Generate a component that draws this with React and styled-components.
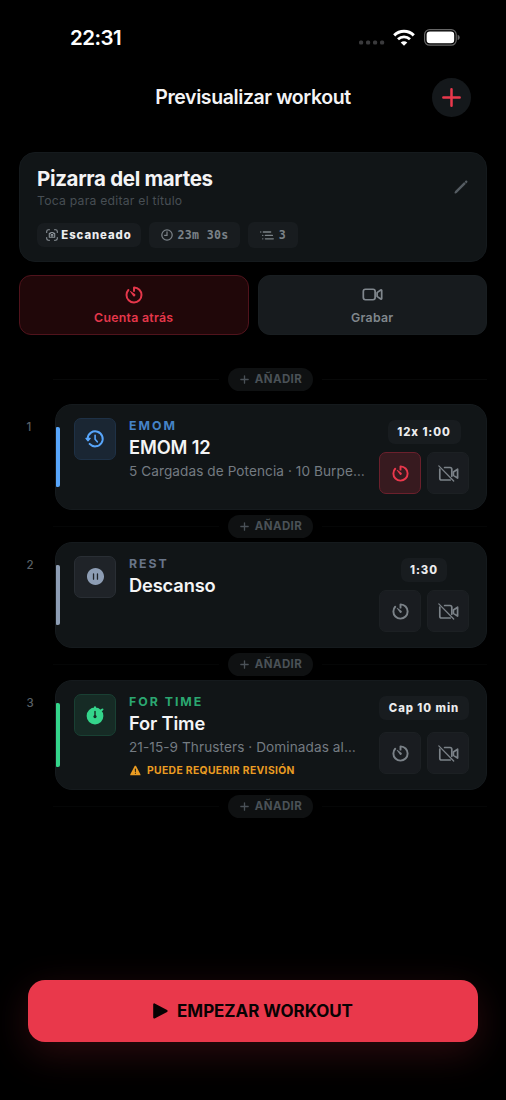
import styled, { createGlobalStyle } from "styled-components";
import {
  IoAdd,
  IoPauseCircle,
  IoPencil,
  IoTimerOutline,
  IoVideocamOutline,
  IoWarning,
} from "react-icons/io5";

const GlobalStyle = createGlobalStyle`
  * {
    box-sizing: border-box;
  }

  body {
    margin: 0;
    background: #000;
    font-family: Inter, "Liberation Sans", sans-serif;
  }

  button {
    padding: 0;
    border: none;
    font-family: inherit;
  }

  svg {
    display: block;
    flex-shrink: 0;
    overflow: visible;
  }
`;

const Screen = styled.div`
  display: flex;
  flex-direction: column;
  width: 506px;
  height: 1100px;
  overflow: hidden;
  background: #000;
`;

const StatusBar = styled.div`
  display: flex;
  align-items: center;
  justify-content: space-between;
  height: 75px;
  margin-bottom: 1px;
  padding: 0 46px 0 70px;
`;

const Time = styled.div`
  color: #fff;
  font-size: 20.5px;
  font-weight: 600;
  letter-spacing: -0.5px;
`;

const StatusIcons = styled.div`
  display: flex;
  align-items: center;
`;

const SignalSlot = styled.div`
  margin: 10px 8px 0 0;
`;

const WifiSlot = styled.div`
  margin-right: 9px;
`;

// Ionicons outlines are drawn with a 32 unit stroke
const BoldIcon = styled.span`
  display: block;

  [stroke-width="32"] {
    stroke-width: ${(props) => props.$stroke || 46}px;
  }
`;

const Header = styled.header`
  display: grid;
  grid-template-columns: 40px 1fr 40px;
  align-items: center;
  height: 42px;
  padding: 0 34px;
`;

const HeaderTitle = styled.h1`
  grid-column: 2;
  margin: 0;
  color: #f4f4f5;
  font-size: 19.5px;
  font-weight: 600;
  letter-spacing: -0.4px;
  text-align: center;
`;

const RoundButton = styled.button`
  display: flex;
  align-items: center;
  justify-content: center;
  width: 39px;
  height: 39px;
  border-radius: 50%;
  background: #14181b;
  color: #ea384c;
`;

const TitleCard = styled.section`
  display: flex;
  align-items: flex-start;
  justify-content: space-between;
  height: 110px;
  margin: 34px 19px 0;
  padding: 13px 17px;
  border: 1px solid #151a1d;
  border-radius: 16px;
  background: #111517;
`;

const WorkoutTitle = styled.h2`
  margin: 0;
  color: #f4f4f5;
  font-size: 20.5px;
  font-weight: 700;
  letter-spacing: -0.33px;
  line-height: 25px;
`;

const Hint = styled.p`
  margin: 2px 0 0;
  color: #474e54;
  font-size: 12.2px;
  font-weight: 400;
  letter-spacing: 0.24px;
  line-height: 16px;
`;

const Badges = styled.div`
  display: flex;
  align-items: center;
  gap: 8px;
  margin-top: 13px;
`;

const Badge = styled.div`
  display: flex;
  align-items: center;
  justify-content: center;
  gap: ${(props) => (props.$mono ? "5px" : "3px")};
  width: ${(props) => props.$width}px;
  height: ${(props) => (props.$mono ? 26 : 24)}px;
  border-radius: ${(props) => (props.$mono ? 6 : 7)}px;
  background: #181c1f;
  color: ${(props) => (props.$mono ? "#7b8288" : "#ececee")};
  font-family: ${(props) => (props.$mono ? '"DejaVu Sans Mono", monospace' : "inherit")};
  font-size: ${(props) => (props.$mono ? 11.6 : 11.3)}px;
  font-weight: ${(props) => (props.$mono ? 700 : 800)};
  letter-spacing: ${(props) => (props.$mono ? "0.3px" : "0.95px")};
  white-space: pre;
`;

const PencilSlot = styled.div`
  margin-top: 13px;
  color: #555c62;
`;

const Toggles = styled.div`
  display: grid;
  grid-template-columns: 1fr 1fr;
  gap: 9px;
  margin: 13px 19px 0;
`;

const Toggle = styled.button`
  display: flex;
  flex-direction: column;
  align-items: center;
  justify-content: center;
  gap: 5px;
  height: 60px;
  border: 1px solid ${(props) => (props.$active ? "#50131c" : "#191e21")};
  border-radius: 12px;
  background: ${(props) => (props.$active ? "#200709" : "#171b1e")};
  color: ${(props) => (props.$active ? "#e5374b" : "#80878d")};
  font-size: 12.3px;
  font-weight: 600;
  letter-spacing: 0.28px;
  line-height: 16px;
`;

const ToggleIcon = styled(BoldIcon)`
  display: flex;
  align-items: center;
  height: 20px;
`;

const Timeline = styled.main`
  display: flex;
  flex-direction: column;
  padding: 32px 19px 0 25px;
`;

const AddRow = styled.div`
  display: flex;
  align-items: center;
  gap: 9px;
  height: 24px;
  margin: ${(props) => (props.$first ? "0 0 13px 28px" : "4px 0 4px 28px")};

  &::before,
  &::after {
    content: "";
    flex: 1;
    height: 1px;
    background: ${(props) => (props.$first ? "#080909" : "#050606")};
  }
`;

const AddButton = styled.button`
  display: flex;
  align-items: center;
  justify-content: center;
  gap: 4px;
  width: 85px;
  height: 23px;
  border-radius: 12px;
  background: #0f1112;
  color: #4a5157;
  font-size: 11.5px;
  font-weight: 700;
  letter-spacing: 0.4px;
`;

const Block = styled.div`
  display: flex;
`;

const Position = styled.div`
  width: 30px;
  padding: 15px 0 0 1.5px;
  color: #596067;
  font-size: 11.5px;
  font-weight: 500;
  line-height: 16px;
`;

const Card = styled.article`
  display: flex;
  flex: 1;
  min-width: 0;
  height: ${(props) => props.$height}px;
  padding-right: 17px;
  border: 1px solid #151a1d;
  border-radius: 17px;
  background: #111517;
`;

const Accent = styled.div`
  width: 4px;
  margin: 22px 14px 22px 0;
  border-radius: 1px 2px 2px 1px;
  background: ${(props) => props.$color};
`;

const IconBox = styled.div`
  display: flex;
  flex-shrink: 0;
  align-items: center;
  justify-content: center;
  width: 42px;
  height: 42px;
  margin: 12.5px 13px 0 0;
  border: 1px solid ${(props) => props.$border};
  border-radius: 7px;
  background: ${(props) => props.$background};
  color: ${(props) => props.$color};
`;

const Info = styled.div`
  flex: 1;
  min-width: 0;
  padding: 12px 0 0;
`;

const Kind = styled.div`
  color: ${(props) => props.$color};
  font-size: 12.3px;
  font-weight: 700;
  letter-spacing: 2px;
  line-height: 18px;
`;

const Name = styled.h3`
  margin: 0;
  color: #f4f4f5;
  font-size: 18.3px;
  font-weight: 600;
  letter-spacing: -0.15px;
  line-height: 24px;
`;

const Description = styled.p`
  margin: 2px 0 0;
  color: #747b82;
  font-size: 13.6px;
  font-weight: 400;
  letter-spacing: 0.08px;
  line-height: 20px;
  white-space: nowrap;
`;

const Warning = styled.div`
  display: flex;
  align-items: center;
  gap: 5px;
  margin-top: 6px;
  color: #ea9c22;
  font-size: 10.3px;
  font-weight: 700;
  letter-spacing: 0.37px;
  line-height: 14px;
  white-space: nowrap;
`;

const Side = styled.div`
  display: flex;
  flex-direction: column;
  align-items: center;
  justify-content: space-between;
  width: 90px;
  padding: 15px 0;
`;

const Actions = styled.div`
  display: flex;
  gap: 6px;
`;

const ActionButton = styled.button`
  display: flex;
  align-items: center;
  justify-content: center;
  width: 42px;
  height: 42px;
  border: 1px solid ${(props) => (props.$active ? "#6b202c" : "#1c2023")};
  border-radius: 7px;
  background: ${(props) => (props.$active ? "#371a1f" : "#191c20")};
  color: ${(props) => (props.$active ? "#ea384c" : "#7b8288")};
`;

const Footer = styled.footer`
  margin: auto 28px 58px;
`;

const StartButton = styled.button`
  display: flex;
  align-items: center;
  justify-content: center;
  gap: 9px;
  width: 100%;
  height: 62px;
  border-radius: 17px;
  background: #e9384b;
  box-shadow: 0 11px 38px rgba(233, 56, 75, 0.19);
  color: #080203;
  font-size: 17px;
  font-weight: 700;
  letter-spacing: -0.05px;
`;

const SignalIcon = () => (
  <svg width="26" height="5" viewBox="0 0 26 5" fill="#3a3a3c">
    <rect x="0" y="0.5" width="4.2" height="4" rx="1.5" />
    <rect x="7" y="0.5" width="4.2" height="4" rx="1.5" />
    <rect x="14" y="0.5" width="4.2" height="4" rx="1.5" />
    <rect x="21" y="0.5" width="4.2" height="4" rx="1.5" />
  </svg>
);

const WifiIcon = () => (
  <svg width="22" height="16" viewBox="0 0 22 16" fill="none" stroke="#fff">
    <path d="M1.2 5.4C6.7 0 15.3 0 20.8 5.4" strokeWidth="3" />
    <path d="M5 9.2C8.4 6 13.6 6 17 9.2" strokeWidth="2.8" />
    <path d="M11 15.8L7.7 12.4C9.6 10.7 12.4 10.7 14.3 12.4Z" fill="#fff" stroke="none" />
  </svg>
);

const BatteryIcon = () => (
  <svg width="36" height="17" viewBox="0 0 36 17">
    <rect x="0.6" y="0.6" width="31.6" height="15.6" rx="5" fill="none" stroke="#666" strokeWidth="1.2" />
    <rect x="2.6" y="2.6" width="27.6" height="11.6" rx="3.3" fill="#fff" />
    <path d="M33.6 5.7C36.4 6.7 36.4 10.1 33.6 11.1Z" fill="#666" />
  </svg>
);

const ScanIcon = () => (
  <svg width="12" height="12" viewBox="0 0 12 12" fill="none" stroke="#8b9298" strokeWidth="1.1" strokeLinecap="round">
    <path d="M0.7 3.5V2.4Q0.7 0.7 2.4 0.7H3.5M8.5 0.7H9.6Q11.3 0.7 11.3 2.4V3.5M11.3 8.5V9.6Q11.3 11.3 9.6 11.3H8.5M3.5 11.3H2.4Q0.7 11.3 0.7 9.6V8.5" />
    <path d="M3.3 4.4H4.3L4.9 3.5H7.1L7.7 4.4H8.7V8.3H3.3Z" strokeLinejoin="round" />
    <circle cx="6" cy="6.3" r="0.9" />
  </svg>
);

const ClockIcon = () => (
  <svg width="12" height="12" viewBox="0 0 12 12" fill="none" stroke="currentColor" strokeWidth="1.25" strokeLinecap="round">
    <circle cx="6" cy="6" r="5.2" />
    <path d="M6 2.8V6.3H3.6" />
  </svg>
);

const ListIcon = () => (
  <svg width="14" height="9" viewBox="0 0 14 9" fill="none" stroke="currentColor" strokeWidth="1.3" strokeLinecap="round">
    <path d="M0.7 1H0.8M3.3 1H10.7M2.7 4.4H2.8M5.4 4.4H12.4M2.7 7.8H2.8M5.4 7.8H13.3" />
  </svg>
);

const HistoryIcon = () => (
  <svg width="20" height="20" viewBox="0 0 20 20" fill="none" stroke="currentColor" strokeLinecap="round" strokeLinejoin="round">
    <path d="M2.7 9.4A7.5 7.5 0 1 1 4.6 14.9" strokeWidth="2" />
    <path d="M0.9 9.4H5.2L3 11.9Z" fill="currentColor" strokeWidth="1.2" />
    <path d="M10.1 6.2V10.2L12.3 12.8" strokeWidth="1.6" />
  </svg>
);

const StopwatchIcon = () => (
  <svg width="20" height="20" viewBox="0 0 20 20" fill="none" strokeLinecap="round">
    <circle cx="10" cy="11" r="8.4" fill="currentColor" />
    <path d="M10 2.2V4M16.2 5.4L17.4 4.5" stroke="currentColor" strokeWidth="2.1" />
    <path d="M10 6.4V11.4" stroke="#162b25" strokeWidth="1.4" />
    <circle cx="10" cy="11.6" r="1.6" fill="#162b25" />
  </svg>
);

const CameraOffIcon = () => (
  <svg width="21" height="17" viewBox="0 0 21 17" fill="none" stroke="currentColor" strokeLinecap="round" strokeLinejoin="round">
    <path d="M1.8 4V13.2Q1.8 15 3.6 15H12.2" strokeWidth="1.7" />
    <path d="M6.6 2.5H12Q13.8 2.5 13.8 4.3V11.2" strokeWidth="1.7" />
    <path d="M19.6 4.2L15.4 7V10.4L19.6 13.1Z" strokeWidth="1.7" />
    <path d="M0.8 0.9L15.7 16" strokeWidth="1.3" />
  </svg>
);

const PlayIcon = () => (
  <svg width="15" height="16" viewBox="0 0 15 16" fill="currentColor" stroke="currentColor">
    <path d="M1.2 1.4V14.6L13.6 8Z" strokeWidth="2" strokeLinejoin="round" />
  </svg>
);

const blocks = [
  {
    kind: "EMOM",
    name: "EMOM 12",
    description: "5 Cargadas de Potencia · 10 Burpe…",
    duration: "12x 1:00",
    durationWidth: 73,
    height: 106,
    countdown: true,
    icon: <HistoryIcon />,
    color: "#58a6fb",
    kindColor: "#4583c6",
    background: "#1a2633",
    border: "#1e3146",
  },
  {
    kind: "REST",
    name: "Descanso",
    duration: "1:30",
    durationWidth: 46,
    height: 106,
    icon: <IoPauseCircle size={21} />,
    color: "#8d9db4",
    kindColor: "#687488",
    background: "#1f2328",
    border: "#292e34",
  },
  {
    kind: "FOR TIME",
    name: "For Time",
    description: "21-15-9 Thrusters · Dominadas al…",
    duration: "Cap 10 min",
    durationWidth: 90,
    height: 110,
    warning: "PUEDE REQUERIR REVISIÓN",
    icon: <StopwatchIcon />,
    color: "#34d58b",
    kindColor: "#2ba771",
    background: "#162b25",
    border: "#194033",
  },
];

const AddDivider = ({ first }) => (
  <AddRow $first={first}>
    <AddButton>
      <BoldIcon $stroke={52}>
        <IoAdd size={13} />
      </BoldIcon>
      AÑADIR
    </AddButton>
  </AddRow>
);

const BlockItem = ({ block, position }) => {
  return (
    <Block>
      <Position>{position}</Position>
      <Card $height={block.height}>
        <Accent $color={block.color} />
        <IconBox $color={block.color} $background={block.background} $border={block.border}>
          {block.icon}
        </IconBox>
        <Info>
          <Kind $color={block.kindColor}>{block.kind}</Kind>
          <Name>{block.name}</Name>
          {block.description && <Description>{block.description}</Description>}
          {block.warning && (
            <Warning>
              <IoWarning size={13} />
              {block.warning}
            </Warning>
          )}
        </Info>
        <Side>
          <Badge $width={block.durationWidth}>{block.duration}</Badge>
          <Actions>
            <ActionButton $active={block.countdown}>
              <BoldIcon $stroke={52}>
                <IoTimerOutline size={19} />
              </BoldIcon>
            </ActionButton>
            <ActionButton>
              <CameraOffIcon />
            </ActionButton>
          </Actions>
        </Side>
      </Card>
    </Block>
  );
};

const App = () => {
  return (
    <>
      <GlobalStyle />
      <Screen>
        <StatusBar>
          <Time>22:31</Time>
          <StatusIcons>
            <SignalSlot>
              <SignalIcon />
            </SignalSlot>
            <WifiSlot>
              <WifiIcon />
            </WifiSlot>
            <BatteryIcon />
          </StatusIcons>
        </StatusBar>
        <Header>
          <HeaderTitle>Previsualizar workout</HeaderTitle>
          <RoundButton>
            <BoldIcon $stroke={44}>
              <IoAdd size={29} />
            </BoldIcon>
          </RoundButton>
        </Header>
        <TitleCard>
          <div>
            <WorkoutTitle>Pizarra del martes</WorkoutTitle>
            <Hint>Toca para editar el título</Hint>
            <Badges>
              <Badge $width={104}>
                <ScanIcon />
                Escaneado
              </Badge>
              <Badge $mono $width={91}>
                <ClockIcon />
                23m 30s
              </Badge>
              <Badge $mono $width={50}>
                <ListIcon />3
              </Badge>
            </Badges>
          </div>
          <PencilSlot>
            <IoPencil size={16} />
          </PencilSlot>
        </TitleCard>
        <Toggles>
          <Toggle $active>
            <ToggleIcon $stroke={50}>
              <IoTimerOutline size={20} />
            </ToggleIcon>
            Cuenta atrás
          </Toggle>
          <Toggle>
            <ToggleIcon $stroke={42}>
              <IoVideocamOutline size={21} />
            </ToggleIcon>
            Grabar
          </Toggle>
        </Toggles>
        <Timeline>
          <AddDivider first />
          {blocks.map((block, index) => (
            <div key={block.kind}>
              <BlockItem block={block} position={index + 1} />
              <AddDivider />
            </div>
          ))}
        </Timeline>
        <Footer>
          <StartButton>
            <PlayIcon />
            EMPEZAR WORKOUT
          </StartButton>
        </Footer>
      </Screen>
    </>
  );
};

export default App;
